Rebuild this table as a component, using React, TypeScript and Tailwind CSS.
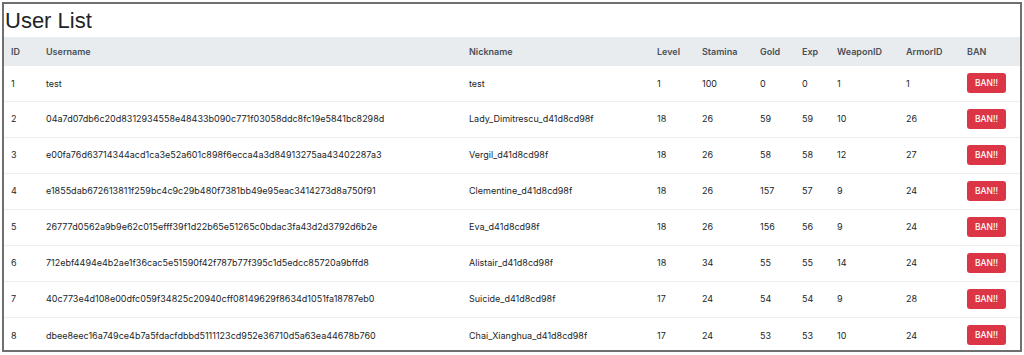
type User = {
  id: number;
  username: string;
  nickname: string;
  level: number;
  stamina: number;
  gold: number;
  exp: number;
  weaponId: number;
  armorId: number;
};

const users: User[] = [
  { id: 1, username: "test", nickname: "test", level: 1, stamina: 100, gold: 0, exp: 0, weaponId: 1, armorId: 1 },
  { id: 2, username: "04a7d07db6c20d8312934558e48433b090c771f03058ddc8fc19e5841bc8298d", nickname: "Lady_Dimitrescu_d41d8cd98f", level: 18, stamina: 26, gold: 59, exp: 59, weaponId: 10, armorId: 26 },
  { id: 3, username: "e00fa76d63714344acd1ca3e52a601c898f6ecca4a3d84913275aa43402287a3", nickname: "Vergil_d41d8cd98f", level: 18, stamina: 26, gold: 58, exp: 58, weaponId: 12, armorId: 27 },
  { id: 4, username: "e1855dab672613811f259bc4c9c29b480f7381bb49e95eac3414273d8a750f91", nickname: "Clementine_d41d8cd98f", level: 18, stamina: 26, gold: 157, exp: 57, weaponId: 9, armorId: 24 },
  { id: 5, username: "26777d0562a9b9e62c015efff39f1d22b65e51265c0bdac3fa43d2d3792d6b2e", nickname: "Eva_d41d8cd98f", level: 18, stamina: 26, gold: 156, exp: 56, weaponId: 9, armorId: 24 },
  { id: 6, username: "712ebf4494e4b2ae1f36cac5e51590f42f787b77f395c1d5edcc85720a9bffd8", nickname: "Alistair_d41d8cd98f", level: 18, stamina: 34, gold: 55, exp: 55, weaponId: 14, armorId: 24 },
  { id: 7, username: "40c773e4d108e00dfc059f34825c20940cff08149629f8634d1051fa18787eb0", nickname: "Suicide_d41d8cd98f", level: 17, stamina: 24, gold: 54, exp: 54, weaponId: 9, armorId: 28 },
  { id: 8, username: "dbee8eec16a749ce4b7a5fdacfdbbd5111123cd952e36710d5a63ea44678b760", nickname: "Chai_Xianghua_d41d8cd98f", level: 17, stamina: 24, gold: 53, exp: 53, weaponId: 10, armorId: 24 },
];

const columns = [
  { label: "ID", width: "w-[35px]" },
  { label: "Username", width: "w-[423px]" },
  { label: "Nickname", width: "w-[188px]" },
  { label: "Level", width: "w-[45px]" },
  { label: "Stamina", width: "w-[58px]" },
  { label: "Gold", width: "w-[42px]" },
  { label: "Exp", width: "w-[35px]" },
  { label: "WeaponID", width: "w-[69px]" },
  { label: "ArmorID", width: "w-[61px]" },
  { label: "BAN", width: "" },
];

export default function App() {
  return (
    <div className="w-[1024px] h-[355px] bg-white p-[2px] font-['Inter',sans-serif] text-[#212529]">
      <div className="h-[350px] border-2 border-[#6f6f6f] overflow-hidden">
        <h1 className="h-[33px] pl-[1px] text-[22px] leading-[33px] font-['Liberation_Sans',sans-serif]">
          User List
        </h1>
        <table className="w-full table-fixed border-collapse text-[9px]">
          <thead>
            <tr className="h-[29px] bg-[#e9ecef] text-[#495057]">
              {columns.map((col) => (
                <th key={col.label} className={`${col.width} px-[7px] text-left font-semibold`}>
                  {col.label}
                </th>
              ))}
            </tr>
          </thead>
          <tbody>
            {users.map((u, i) => (
              <tr key={u.id} className={i === 0 ? "h-[35px]" : "h-[36px] border-t border-[#eceef0]"}>
                <td className="px-[7px]">{u.id}</td>
                <td className="px-[7px] whitespace-nowrap">{u.username}</td>
                <td className="px-[7px]">{u.nickname}</td>
                <td className="px-[7px]">{u.level}</td>
                <td className="px-[7px]">{u.stamina}</td>
                <td className="px-[7px]">{u.gold}</td>
                <td className="px-[7px]">{u.exp}</td>
                <td className="px-[7px]">{u.weaponId}</td>
                <td className="px-[7px]">{u.armorId}</td>
                <td className="px-[7px]">
                  <button
                    type="button"
                    className="w-[39px] h-[20px] rounded-[3px] bg-[#dc3545] text-white text-[8.5px] font-medium"
                  >
                    BAN!!
                  </button>
                </td>
              </tr>
            ))}
          </tbody>
        </table>
      </div>
    </div>
  );
}
